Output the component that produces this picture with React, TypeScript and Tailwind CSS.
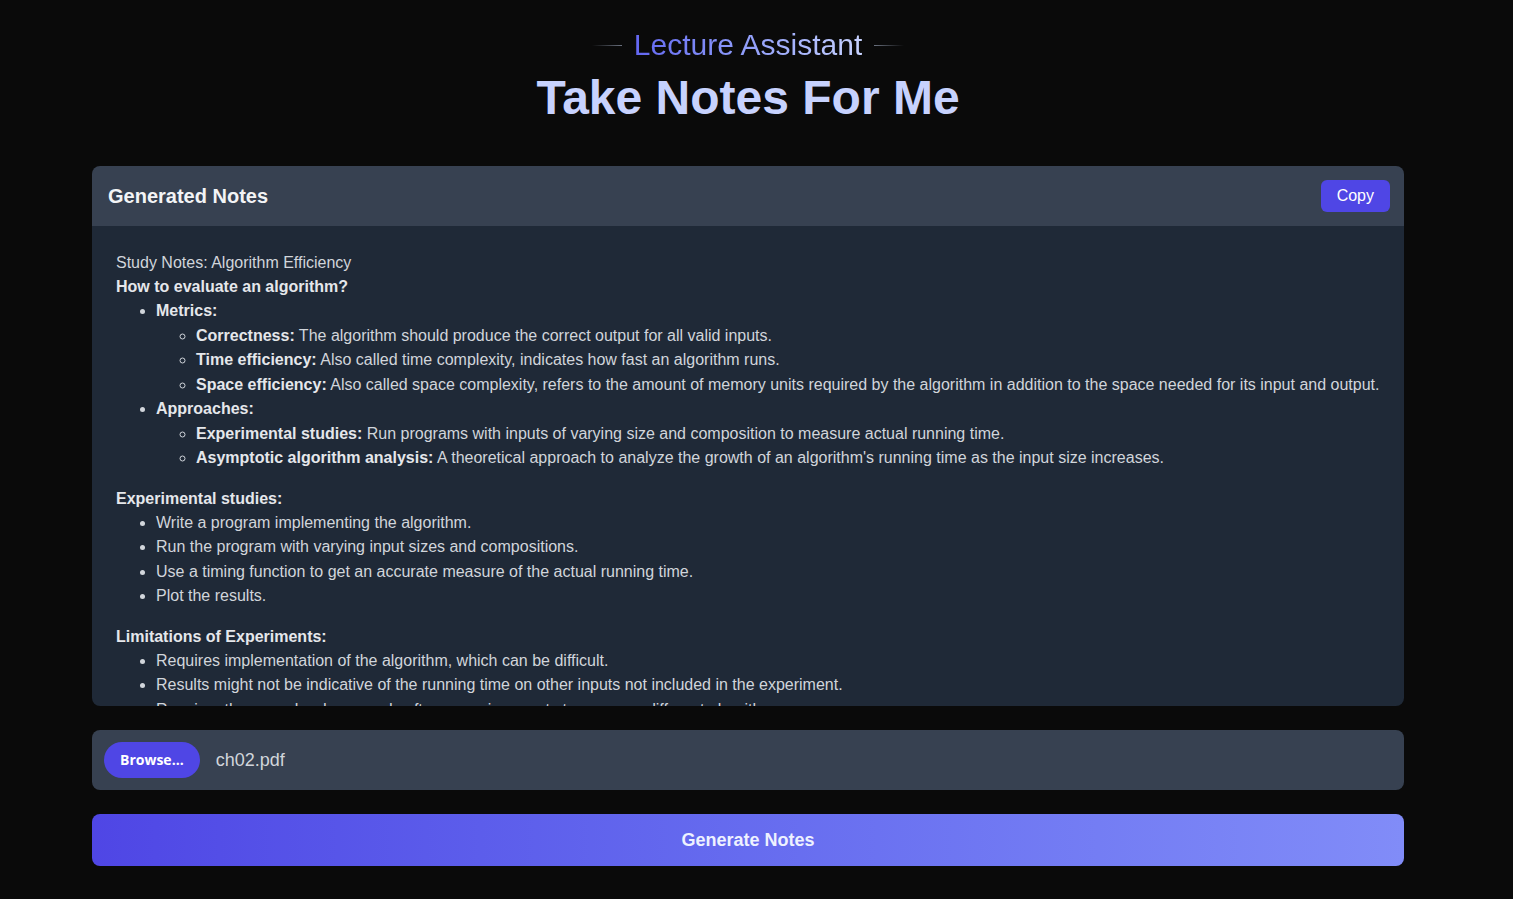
import React from 'react';

const sans = { fontFamily: '"Liberation Sans", Arial, sans-serif' };

export default function App() {
  return (
    <div className="min-h-screen w-full bg-[#0a0a0a] font-['Liberation_Sans',Arial,sans-serif]">
      <div className="w-[1496px] px-[92px] pt-[27px] pb-[33px]">
        {/* Header */}
        <div className="flex flex-col items-center">
          <div className="flex items-center gap-3">
            <span className="h-px w-[30px] bg-gradient-to-r from-transparent to-[#6b7280]" />
            <span className="text-3xl bg-gradient-to-r from-[#6366f1] to-[#c7d2fe] bg-clip-text text-transparent">
              Lecture Assistant
            </span>
            <span className="h-px w-[30px] bg-gradient-to-r from-[#6b7280] to-transparent" />
          </div>
          <h1 className="mt-[11px] text-5xl font-bold text-[#c7d2fe]">Take Notes For Me</h1>
        </div>

        {/* Notes card */}
        <div className="mt-[44px] rounded-lg overflow-hidden">
          <div className="flex items-center justify-between bg-[#374151] pl-4 pr-[14px] py-[14px]">
            <h2 className="text-xl leading-7 font-bold text-[#f3f4f6]">Generated Notes</h2>
            <button className="rounded-md bg-[#4f46e5] px-4 py-1 text-base leading-6 text-white">Copy</button>
          </div>
          <div className="h-[480px] overflow-hidden bg-[#1f2937] px-6 pt-[25px] text-base text-[#d1d5db]">
            <p className="leading-6">Study Notes: Algorithm Efficiency</p>
            <p className="leading-6 font-bold text-[#e5e7eb]">How to evaluate an algorithm?</p>
            <ul className="list-disc pl-10 leading-[24.5px]">
              <li>
                <b className="text-[#e5e7eb]">Metrics:</b>
                <ul className="list-[circle] pl-10">
                  <li><b className="text-[#e5e7eb]">Correctness:</b> The algorithm should produce the correct output for all valid inputs.</li>
                  <li><b className="text-[#e5e7eb]">Time efficiency:</b> Also called time complexity, indicates how fast an algorithm runs.</li>
                  <li><b className="text-[#e5e7eb]">Space efficiency:</b> Also called space complexity, refers to the amount of memory units required by the algorithm in addition to the space needed for its input and output.</li>
                </ul>
              </li>
              <li>
                <b className="text-[#e5e7eb]">Approaches:</b>
                <ul className="list-[circle] pl-10">
                  <li><b className="text-[#e5e7eb]">Experimental studies:</b> Run programs with inputs of varying size and composition to measure actual running time.</li>
                  <li><b className="text-[#e5e7eb]">Asymptotic algorithm analysis:</b> A theoretical approach to analyze the growth of an algorithm's running time as the input size increases.</li>
                </ul>
              </li>
            </ul>

            <p className="mt-4 leading-6 font-bold text-[#e5e7eb]">Experimental studies:</p>
            <ul className="list-disc pl-10 leading-[24.5px]">
              <li>Write a program implementing the algorithm.</li>
              <li>Run the program with varying input sizes and compositions.</li>
              <li>Use a timing function to get an accurate measure of the actual running time.</li>
              <li>Plot the results.</li>
            </ul>

            <p className="mt-4 leading-6 font-bold text-[#e5e7eb]">Limitations of Experiments:</p>
            <ul className="list-disc pl-10 leading-[24.5px]">
              <li>Requires implementation of the algorithm, which can be difficult.</li>
              <li>Results might not be indicative of the running time on other inputs not included in the experiment.</li>
              <li>Requires the same hardware and software environments to compare different algorithms.</li>
            </ul>
          </div>
        </div>

        {/* File input */}
        <div className="mt-6 flex items-center gap-4 rounded-lg bg-[#374151] p-3">
          <button className="rounded-full bg-[#4f46e5] px-4 py-2 text-sm leading-5 font-bold text-white font-['Open_Sans',sans-serif]">
            Browse...
          </button>
          <span className="text-lg text-[#d1d5db]" style={sans}>ch02.pdf</span>
        </div>

        {/* Generate */}
        <button className="mt-6 w-full rounded-lg bg-gradient-to-r from-[#4f46e5] to-[#818cf8] py-3 text-lg leading-7 font-bold text-[#eef2ff]">
          Generate Notes
        </button>
      </div>
    </div>
  );
}
